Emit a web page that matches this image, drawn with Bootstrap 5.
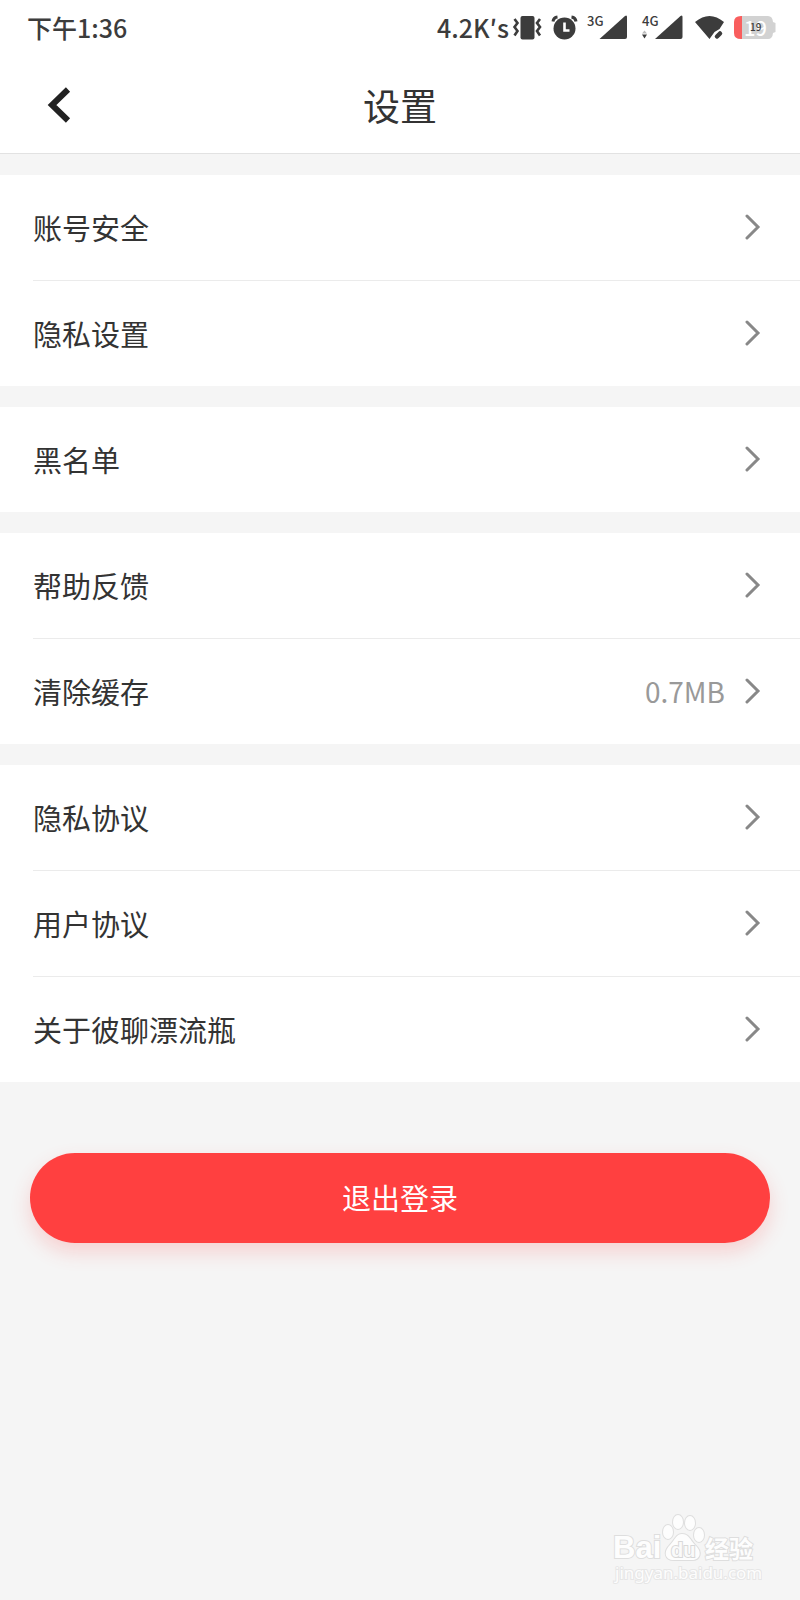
<!DOCTYPE html>
<html lang="zh-CN">
<head>
<meta charset="utf-8">
<meta name="viewport" content="width=device-width, initial-scale=1">
<title>设置</title>
<link href="https://cdn.jsdelivr.net/npm/bootstrap@5.3.0/dist/css/bootstrap.min.css" rel="stylesheet">
<style>
  body { font-family: "Noto Sans CJK SC", "Noto Sans", sans-serif; background: #f5f5f5; color: #333; }
  .status { height: 56px; padding: 0 24px 2px 27px; font-size: 25px; font-weight: 500; line-height: 30px; color: #3c3c3c; }
  .titlebar { height: 97px; padding: 0 40px; }
  .titlebar h1 { font-size: 37px; line-height: 48px; font-weight: 400; }
  .titlebar, .status { background: #fff; }
  .topbar { border-bottom: 1px solid #e2e2e2; }
  .side { width: 40px; }
  .groups { display: grid; gap: 21px; padding-top: 21px; }
  .group { background: #fff; padding-left: 33px; }
  .entry { height: 105px; padding: 0 39px 2px 0; color: inherit; font-size: 29px; line-height: 40px; text-decoration: none; }
  .entry + .entry { border-top: 1px solid #ebebeb; height: 106px; }
  .entry-value { font-size: 28px; color: #999; margin-right: 20px; }
  .logout-wrap { padding: 71px 30px 0; }
  .logout, .logout:hover { height: 90px; background: #ff4040; color: #fff; font-size: 29px; line-height: 40px; padding: 0 0 2px; border: 0; box-shadow: 0 9px 20px rgba(255, 64, 64, .2); }
  .watermark { padding: 0 38px 14px 0; }
  svg { display: block; flex: none; }
</style>
</head>
<body>
<svg width="0" height="0" class="position-absolute" aria-hidden="true">
  <symbol id="chev" viewBox="0 0 16 26"><path d="M2 2 13 13 2 24" fill="none" stroke="#888" stroke-width="3" stroke-linecap="round" stroke-linejoin="miter"/></symbol>
</svg>
<div class="d-flex flex-column min-vh-100">
  <header class="topbar">
    <div class="status d-flex align-items-center justify-content-between">
      <span>下午1:36</span>
      <div class="d-flex align-items-center">
        <span>4.2K′s</span>
        <svg width="267" height="34" viewBox="509 10 267 34" fill="#3c3c3c" aria-hidden="true">
          <rect x="520.500" y="16" width="14" height="23.500" rx="2"/>
          <path d="M514.500 19l3 4-3 4 3 4-3 4.500M540 19l-3 4 3 4-3 4 3 4.500" fill="none" stroke="#3c3c3c" stroke-width="2.600"/>
          <circle cx="564.500" cy="28.500" r="11"/>
          <path d="M553 21.500q.5-4 4.500-4.500M576 21.500q-.5-4-4.500-4.500" fill="none" stroke="#3c3c3c" stroke-width="3"/>
          <path d="M564.500 22.500v8h5" fill="none" stroke="#fff" stroke-width="2.600"/>
          <text x="587" y="26" font-size="13">3G</text>
          <path d="M599.500 39 625 16q2-1.500 2 1V37q0 2-2 2z"/>
          <text x="642" y="26" font-size="13">4G</text>
          <path d="M642 33.500l2.500-3 2.500 3z" fill="#bbb"/><path d="M642 34.500h5l-2.500 4z"/>
          <path d="M655 39 680.500 16q2-1.500 2 1V37q0 2-2 2z"/>
          <path d="M695 22q14.500-12 29 0l-4.500 7-5 3-5 7z"/>
          <path d="M717 36.500l3-3" stroke="#3c3c3c" stroke-width="4.500" stroke-linecap="round"/>
          <path d="M742 16h26q4.500 0 5 6l2.500 1v9l-2.500 1q-.5 6-5 6h-26z" fill="#d2d2d2"/>
          <path d="M742 16h-1q-7 0-7 6v11q0 6 7 6h1z" fill="#f95e5e"/>
          <text x="744" y="36" font-size="20" fill="#fff">19</text>
          <text x="750" y="31" font-size="10">19</text>
        </svg>
      </div>
    </div>
    <div class="titlebar d-flex align-items-center justify-content-between">
      <button type="button" class="btn p-0 border-0 side" aria-label="返回">
        <svg width="40" height="40" viewBox="0 0 40 40" aria-hidden="true"><path d="M28 4.500 12 20 28 35.500" fill="none" stroke="#222" stroke-width="6"/></svg>
      </button>
      <h1 class="m-0">设置</h1>
      <span class="side"></span>
    </div>
  </header>
  <main>
    <div class="groups">
      <nav class="group" aria-label="账号">
        <a href="#" class="entry d-flex align-items-center"><span class="me-auto">账号安全</span><svg width="16" height="26"><use href="#chev"/></svg></a>
        <a href="#" class="entry d-flex align-items-center"><span class="me-auto">隐私设置</span><svg width="16" height="26"><use href="#chev"/></svg></a>
      </nav>
      <nav class="group" aria-label="黑名单">
        <a href="#" class="entry d-flex align-items-center"><span class="me-auto">黑名单</span><svg width="16" height="26"><use href="#chev"/></svg></a>
      </nav>
      <nav class="group" aria-label="帮助">
        <a href="#" class="entry d-flex align-items-center"><span class="me-auto">帮助反馈</span><svg width="16" height="26"><use href="#chev"/></svg></a>
        <a href="#" class="entry d-flex align-items-center"><span class="me-auto">清除缓存</span><span class="entry-value">0.7MB</span><svg width="16" height="26"><use href="#chev"/></svg></a>
      </nav>
      <nav class="group" aria-label="协议">
        <a href="#" class="entry d-flex align-items-center"><span class="me-auto">隐私协议</span><svg width="16" height="26"><use href="#chev"/></svg></a>
        <a href="#" class="entry d-flex align-items-center"><span class="me-auto">用户协议</span><svg width="16" height="26"><use href="#chev"/></svg></a>
        <a href="#" class="entry d-flex align-items-center"><span class="me-auto">关于彼聊漂流瓶</span><svg width="16" height="26"><use href="#chev"/></svg></a>
      </nav>
    </div>
    <div class="logout-wrap"><button type="button" class="btn logout rounded-pill w-100">退出登录</button></div>
  </main>
  <footer class="watermark mt-auto d-flex justify-content-end">
    <svg width="150" height="74" viewBox="0 0 150 74" fill="#fdfdfd" stroke="#dedede" stroke-width="2" paint-order="stroke" font-family="Liberation Sans, sans-serif">
      <text x="1" y="46" font-size="31" font-weight="700">Bai</text>
      <ellipse cx="56" cy="20" rx="5" ry="7"/><ellipse cx="66" cy="10" rx="5" ry="7"/><ellipse cx="78" cy="11" rx="5" ry="7"/><ellipse cx="87" cy="23" rx="5" ry="7"/>
      <path d="M70 22c7 0 8 6 13 11 8 7 5 15-3 15H62c-9 0-11-8-4-15 5-5 6-11 12-11z"/>
      <text x="59" y="45" font-size="20" font-weight="700" fill="#fafafa" stroke="#d8d8d8">du</text>
      <text x="93" y="46" font-size="24" font-weight="700" font-family="Noto Sans CJK SC, sans-serif">经验</text>
      <text x="3" y="67" font-size="17" stroke="#e6e6e6" font-family="Noto Sans, sans-serif">jingyan.baidu.com</text>
    </svg>
  </footer>
</div>
<script src="https://cdn.jsdelivr.net/npm/bootstrap@5.3.0/dist/js/bootstrap.bundle.min.js"></script>
</body>
</html>
